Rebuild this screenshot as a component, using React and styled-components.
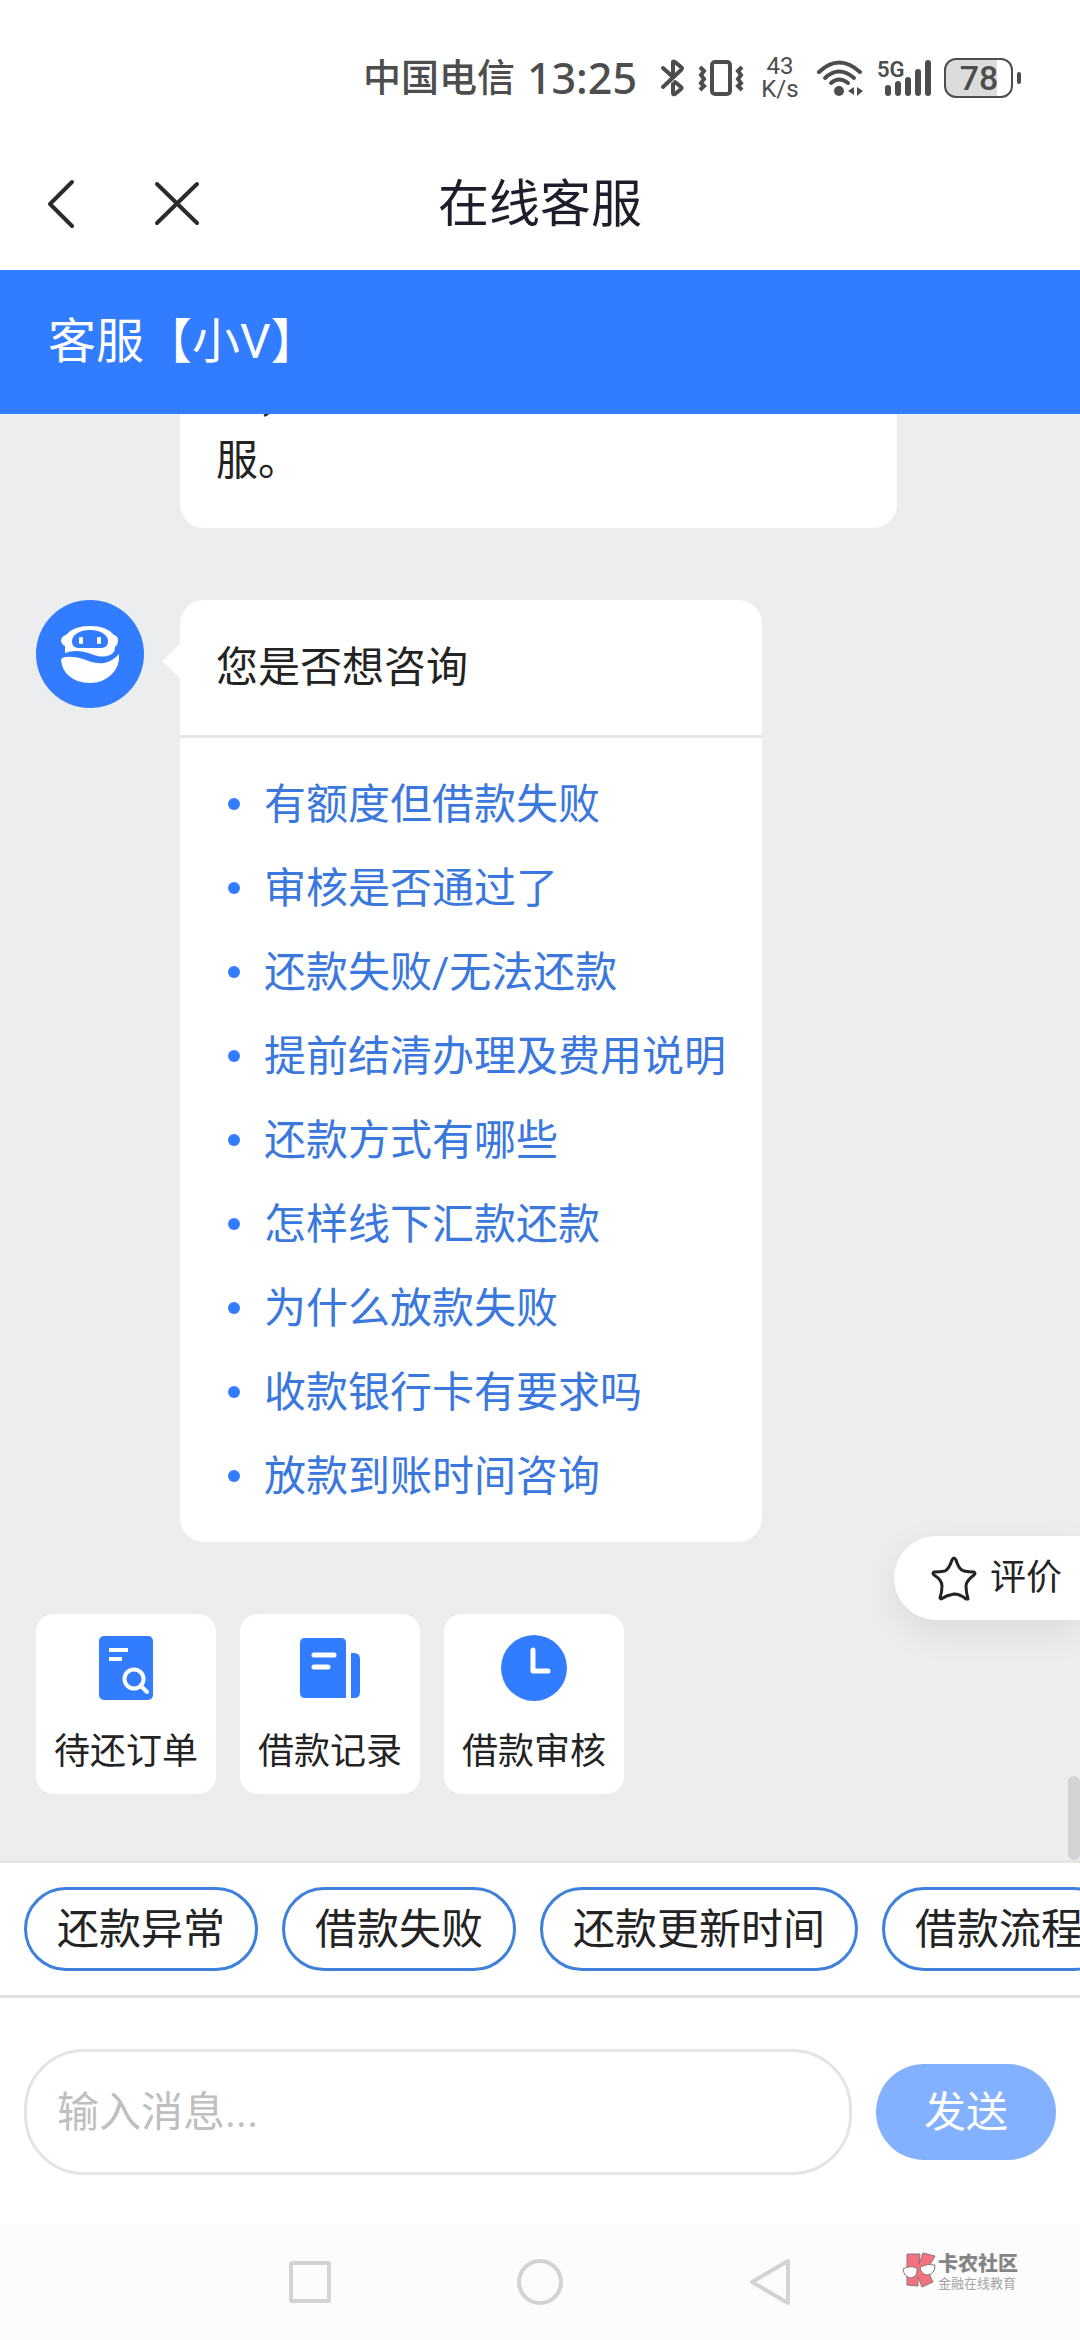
import React from "react";
import styled, { createGlobalStyle } from "styled-components";

const GlobalStyle = createGlobalStyle`
  * {
    box-sizing: border-box;
  }
  body {
    margin: 0;
    background: #fff;
    font-family: Roboto, "Noto Sans CJK SC", sans-serif;
    line-height: 1.5;
    color: #232323;
  }
  button, input {
    font-family: inherit;
    line-height: inherit;
    color: inherit;
  }
  button {
    padding: 0;
    border: 0;
    background: none;
    cursor: pointer;
  }
`;

const Page = styled.div`
  display: flex;
  flex-direction: column;
  height: 100vh;
  overflow: hidden;
`;

const StatusBar = styled.div`
  display: flex;
  align-items: center;
  justify-content: flex-end;
  flex: none;
  height: 138px;
  padding: 18px 59px 0 0;
  color: #4d4d4d;
  svg {
    display: block;
    flex: none;
  }
`;

const Carrier = styled.span`
  font-size: 38px;
  font-weight: 500;
`;

const Clock = styled.span`
  margin: 0 24px 0 12px;
  font-family: "Noto Sans", sans-serif;
  font-size: 43px;
  font-weight: 500;
`;

const StatusIcons = styled.span`
  display: flex;
  align-items: center;
  gap: 13px;
`;

const Speed = styled.span`
  display: flex;
  flex-direction: column;
  align-items: center;
  width: 38px;
  margin: 0 4px;
  font-size: 24px;
  line-height: 23px;
`;

const TitleBar = styled.header`
  display: grid;
  grid-template-columns: 1fr auto 1fr;
  align-items: center;
  flex: none;
  height: 132px;
  padding: 0 36px;
`;

const TitleActions = styled.div`
  display: flex;
  gap: 68px;
  svg {
    display: block;
  }
`;

const Title = styled.h1`
  margin: 0;
  font-size: 51px;
  font-weight: 400;
  line-height: 63px;
  color: #1f1d2b;
`;

const AgentBar = styled.div`
  display: flex;
  align-items: center;
  flex: none;
  height: 144px;
  padding: 0 48px;
  background: #327dff;
  color: #fff;
  font-size: 48px;
`;

const ChatWrap = styled.main`
  position: relative;
  flex: 1;
  min-height: 0;
  background: #ebedef;
`;

const Chat = styled.div`
  display: flex;
  flex-direction: column;
  justify-content: flex-end;
  gap: 72px;
  height: 100%;
  padding: 0 36px 66px;
  overflow: hidden;
`;

const Message = styled.div`
  display: flex;
  align-items: flex-start;
  gap: 36px;
  padding-left: ${(p) => (p.$hasAvatar ? "0" : "144px")};
`;

const Avatar = styled.div`
  flex: none;
  width: 108px;
  height: 108px;
  border-radius: 50%;
  background: #327dff;
  svg {
    display: block;
  }
`;

const Bubble = styled.div`
  position: relative;
  min-width: ${(p) => (p.$wide ? "717px" : "0")};
  border-radius: 24px;
  background: #fff;
  font-size: 42px;
  line-height: 63px;
`;

const BubbleArrow = styled.span`
  position: absolute;
  top: 44px;
  left: -18px;
  border: 17px solid transparent;
  border-left-width: 0;
  border-right: 18px solid #fff;
`;

const BubbleText = styled.p`
  margin: 0;
  padding: ${(p) => (p.$continued ? "0" : "36px")} 36px ${(p) => (p.$last ? "36px" : "0")};
  text-indent: ${(p) => (p.$indent ? "1em" : "0")};
`;

const BubbleTitle = styled.h2`
  margin: 0;
  padding: 36px;
  border-bottom: 3px solid #e5e5e5;
  font-size: 42px;
  font-weight: 400;
  line-height: 63px;
`;

const QuestionList = styled.ul`
  margin: 0;
  padding: 24px 36px 24px 48px;
  list-style: none;
`;

const QuestionItem = styled.li`
  display: flex;
  align-items: center;
  gap: 24px;
  height: 84px;
  &::before {
    content: "";
    width: 12px;
    height: 12px;
    border-radius: 50%;
    background: #327dff;
  }
`;

const QuestionLink = styled.a`
  color: #3a78de;
  text-decoration: none;
`;

const Tools = styled.div`
  display: flex;
  gap: 24px;
`;

const ToolButton = styled.button`
  display: flex;
  flex-direction: column;
  align-items: center;
  gap: 21px;
  width: 180px;
  height: 180px;
  padding-top: 18px;
  border-radius: 18px;
  background: #fff;
  font-size: 36px;
  svg {
    display: block;
    flex: none;
  }
`;

const RateButton = styled.button`
  position: absolute;
  right: 0;
  bottom: 240px;
  display: flex;
  align-items: center;
  gap: 12px;
  height: 84px;
  padding: 0 18px 0 36px;
  border-radius: 42px 0 0 42px;
  background: #fff;
  box-shadow: 0 12px 36px rgba(0, 0, 0, 0.08);
  font-size: 36px;
`;

const ScrollThumb = styled.div`
  position: absolute;
  right: 0;
  bottom: 0;
  width: 12px;
  height: 84px;
  border-radius: 6px;
  background: #d2d3d5;
`;

const QuickBar = styled.nav`
  display: flex;
  gap: 24px;
  flex: none;
  padding: 24px;
  border-top: 3px solid #e5e5e5;
  border-bottom: 3px solid #e2e2e2;
  overflow: hidden;
`;

const Chip = styled.button`
  flex: none;
  height: 84px;
  padding: 0 30px;
  border: 3px solid #4080dd;
  border-radius: 42px;
  background: #fff;
  font-size: 42px;
  white-space: nowrap;
`;

const Composer = styled.form`
  display: flex;
  align-items: center;
  gap: 24px;
  flex: none;
  padding: 51px 24px 49px;
`;

const MessageInput = styled.input`
  flex: 1;
  min-width: 0;
  height: 126px;
  padding: 0 30px;
  border: 3px solid #e4e4e4;
  border-radius: 60px;
  background: #fff;
  font-size: 42px;
  outline: none;
  &::placeholder {
    color: #bfbfbf;
    opacity: 1;
  }
`;

const SendButton = styled.button`
  width: 180px;
  height: 96px;
  border-radius: 48px;
  background: #84b1ff;
  color: #fff;
  font-size: 42px;
`;

const SystemNav = styled.footer`
  position: relative;
  display: flex;
  align-items: center;
  justify-content: center;
  gap: 182px;
  flex: none;
  height: 116px;
  background: #fcfcfc;
  svg {
    display: block;
  }
`;

const Brand = styled.div`
  position: absolute;
  right: 62px;
  top: 28px;
  display: flex;
  gap: 2px;
`;

const BrandText = styled.div`
  display: flex;
  flex-direction: column;
  color: #858585;
`;

const BrandName = styled.strong`
  font-size: 20px;
  line-height: 24px;
  font-weight: 900;
`;

const BrandTag = styled.span`
  font-size: 13px;
  line-height: 16px;
  color: #a3a3a3;
`;

const BluetoothIcon = () => (
  <svg width="24" height="38" viewBox="0 0 24 38" fill="none" stroke="currentColor" strokeWidth="4" strokeLinecap="round" strokeLinejoin="round">
    <path d="M2 9 L12 18 V3 Q12 2 14 3 L20 8 Q22 9 20 11 L2 28" />
    <path d="M12 25 V34 Q12 36 14 35 L20 30 Q21 29 20 28 L14 23" />
  </svg>
);

const VibrateIcon = () => (
  <svg width="46" height="38" viewBox="0 0 46 38" fill="none" stroke="currentColor" strokeWidth="4">
    <rect x="14" y="3" width="18" height="32" rx="3" />
    <path d="M2 8 L6 12 L3 16 L6 20 L3 24 L6 27 L2 31 M44 8 L40 12 L43 16 L40 20 L43 24 L40 27 L44 31" />
  </svg>
);

const WifiIcon = () => (
  <svg width="48" height="38" viewBox="0 0 48 38" fill="none" stroke="currentColor" strokeWidth="4" strokeLinecap="round">
    <path d="M3 13 Q23 -6 44 13" />
    <path d="M9 19 Q23 6 38 19" />
    <path d="M15 24 Q23 17 32 24" />
    <circle cx="23" cy="32" r="5" fill="currentColor" stroke="none" />
    <path d="M38 28 V36 L32 32 Z M41 28 V37 L47 32 Z" fill="currentColor" stroke="none" />
  </svg>
);

const SignalIcon = () => (
  <svg width="54" height="38" viewBox="0 0 54 38" fill="currentColor">
    <text x="0" y="18" fontSize="22" fontWeight="600" fontFamily="Roboto, sans-serif">5G</text>
    <rect x="8" y="26" width="6" height="11" rx="3" />
    <rect x="18" y="22" width="6" height="15" rx="3" />
    <rect x="28" y="18" width="6" height="19" rx="3" />
    <rect x="38" y="10" width="6" height="27" rx="3" />
    <rect x="48" y="1" width="6" height="36" rx="3" />
  </svg>
);

const BatteryIcon = () => (
  <svg width="77" height="40" viewBox="0 0 77 40">
    <path d="M12 1 H53 V39 H12 Q1 39 1 28 V12 Q1 1 12 1 Z" fill="#dcdcdc" />
    <rect x="1" y="1" width="67" height="38" rx="11" fill="none" stroke="currentColor" strokeWidth="2" />
    <rect x="73" y="14" width="4" height="12" rx="2" fill="currentColor" />
    <text x="35" y="32" textAnchor="middle" fontSize="34" fontWeight="500" fontFamily="Roboto, sans-serif" fill="currentColor">78</text>
  </svg>
);

const RobotIcon = () => (
  <svg width="108" height="108" viewBox="0 0 108 108">
    <path d="M30 35 Q37 26 54 26 Q71 26 78 35 Q82 36 82 40 Q82 45 79 47 Q79 53 74 55 Q67 58 58 55 Q48 51 40 51 Q34 51 29 53 V46 Q25 44 25 40 Q26 36 30 35 Z" fill="#fff" />
    <path d="M54 30 C66 30 72 36 72 41 C72 46 69 48 65 48 H43 C39 48 36 46 36 41 C36 36 42 30 54 30 Z" fill="#327dff" />
    <rect x="43" y="37" width="4" height="7" rx="1" fill="#fff" />
    <rect x="61" y="37" width="4" height="7" rx="1" fill="#fff" />
    <path d="M25 60 Q26 57 30 57 Q40 56 50 60 Q60 64 68 63 Q77 61 83 54 Q84 66 76 74 Q67 83 54 83 Q41 83 33 76 Q26 70 25 60 Z" fill="#fff" />
  </svg>
);

const OrderIcon = () => (
  <svg width="72" height="72" viewBox="0 0 72 72">
    <rect x="9" y="4" width="54" height="64" rx="5" fill="#327dff" />
    <path d="M19 18 H38 M19 27 H32" stroke="#fff" strokeWidth="4" />
    <circle cx="44" cy="47" r="9.5" fill="none" stroke="#fff" strokeWidth="4" />
    <path d="M51 54 L57 60" stroke="#fff" strokeWidth="4" strokeLinecap="round" />
  </svg>
);

const RecordIcon = () => (
  <svg width="72" height="72" viewBox="0 0 72 72">
    <path d="M11 6 H47 Q52 6 52 11 V66 H11 Q6 66 6 61 V11 Q6 6 11 6 Z" fill="#327dff" />
    <path d="M57 21 H60 Q66 21 66 27 V60 Q66 66 60 66 H57 Z" fill="#327dff" />
    <path d="M20 23 H40 M20 35 H34" stroke="#fff" strokeWidth="5" strokeLinecap="round" />
  </svg>
);

const ClockIcon = () => (
  <svg width="72" height="72" viewBox="0 0 72 72">
    <circle cx="36" cy="36" r="33" fill="#327dff" />
    <path d="M35 18 V39 H50" fill="none" stroke="#fff" strokeWidth="5" strokeLinecap="round" strokeLinejoin="round" />
  </svg>
);

const StarIcon = () => (
  <svg width="48" height="48" viewBox="0 0 48 48" fill="none" stroke="#232323" strokeWidth="3" strokeLinejoin="round">
    <path d="M24 4 Q25 4 26 6 Q29 16 34 17 Q39 18 44 18 Q46 19 44 21 Q36 27 36 32 Q36 38 38 45 L36 45 Q30 40 24 40 Q17 41 11 45 L10 44 Q12 38 12 32 Q12 26 4 21 Q2 19 4 18 Q10 18 15 17 Q19 15 22 6 Q23 4 24 4 Z" />
  </svg>
);

const BrandLogo = () => (
  <svg width="34" height="36" viewBox="0 0 34 36" stroke="#8d7478" strokeWidth="1">
    <path d="M5 2 H18 L17 12 L21 1 L33 4 L25 18 L31 30 L20 35 L16 25 V34 L5 33 Z" fill="#f4727e" />
    <path d="M1 17 Q8 13 15 16 Q16 25 9 26 Q2 25 1 17 Z M18 15 Q26 11 33 13 Q33 22 26 23 Q19 23 18 15 Z" fill="#fff" />
  </svg>
);

const questions = [
  "有额度但借款失败",
  "审核是否通过了",
  "还款失败/无法还款",
  "提前结清办理及费用说明",
  "还款方式有哪些",
  "怎样线下汇款还款",
  "为什么放款失败",
  "收款银行卡有要求吗",
  "放款到账时间咨询",
];

const tools = [
  { label: "待还订单", icon: <OrderIcon /> },
  { label: "借款记录", icon: <RecordIcon /> },
  { label: "借款审核", icon: <ClockIcon /> },
];

const chips = ["还款异常", "借款失败", "还款更新时间", "借款流程"];

const App = () => {
  return (
    <>
      <GlobalStyle />
      <Page>
        <StatusBar>
          <Carrier>中国电信</Carrier>
          <Clock>13:25</Clock>
          <StatusIcons>
            <BluetoothIcon />
            <VibrateIcon />
            <Speed>
              <span>43</span>
              <span>K/s</span>
            </Speed>
            <WifiIcon />
            <SignalIcon />
            <BatteryIcon />
          </StatusIcons>
        </StatusBar>
        <TitleBar>
          <TitleActions>
            <button aria-label="返回">
              <svg width="48" height="54" viewBox="0 0 48 54" fill="none" stroke="#2b2b2b" strokeWidth="4" strokeLinecap="round" strokeLinejoin="round">
                <path d="M36 5 L14 27 L36 49" />
              </svg>
            </button>
            <button aria-label="关闭">
              <svg width="48" height="54" viewBox="0 0 48 54" fill="none" stroke="#2b2b2b" strokeWidth="4" strokeLinecap="round">
                <path d="M5 7 L45 46 M45 7 L5 46" />
              </svg>
            </button>
          </TitleActions>
          <Title>在线客服</Title>
        </TitleBar>
        <AgentBar>客服【小V】</AgentBar>
        <ChatWrap>
          <Chat>
            <Message>
              <Bubble $wide>
                <BubbleText $indent>，</BubbleText>
                <BubbleText $continued $last>服。</BubbleText>
              </Bubble>
            </Message>
            <Message $hasAvatar>
              <Avatar>
                <RobotIcon />
              </Avatar>
              <Bubble>
                <BubbleArrow />
                <BubbleTitle>您是否想咨询</BubbleTitle>
                <QuestionList>
                  {questions.map((question) => (
                    <QuestionItem key={question}>
                      <QuestionLink href="#">{question}</QuestionLink>
                    </QuestionItem>
                  ))}
                </QuestionList>
              </Bubble>
            </Message>
            <Tools>
              {tools.map((tool) => (
                <ToolButton key={tool.label}>
                  {tool.icon}
                  {tool.label}
                </ToolButton>
              ))}
            </Tools>
          </Chat>
          <RateButton>
            <StarIcon />
            评价
          </RateButton>
          <ScrollThumb />
        </ChatWrap>
        <QuickBar>
          {chips.map((chip) => (
            <Chip key={chip}>{chip}</Chip>
          ))}
        </QuickBar>
        <Composer onSubmit={(e) => e.preventDefault()}>
          <MessageInput aria-label="输入消息" placeholder="输入消息..." />
          <SendButton type="submit">发送</SendButton>
        </Composer>
        <SystemNav>
          <button aria-label="最近任务">
            <svg width="48" height="48" viewBox="0 0 48 48" fill="none" stroke="#d3d3d3" strokeWidth="4">
              <rect x="5" y="5" width="38" height="38" rx="1" />
            </svg>
          </button>
          <button aria-label="主屏幕">
            <svg width="48" height="48" viewBox="0 0 48 48" fill="none" stroke="#d3d3d3" strokeWidth="4">
              <circle cx="24" cy="24" r="21" />
            </svg>
          </button>
          <button aria-label="返回上一页">
            <svg width="48" height="48" viewBox="0 0 48 48" fill="none" stroke="#d3d3d3" strokeWidth="4" strokeLinejoin="round">
              <path d="M42 3 V45 L6 24 Z" />
            </svg>
          </button>
          <Brand>
            <BrandLogo />
            <BrandText>
              <BrandName>卡农社区</BrandName>
              <BrandTag>金融在线教育</BrandTag>
            </BrandText>
          </Brand>
        </SystemNav>
      </Page>
    </>
  );
};

export default App;
